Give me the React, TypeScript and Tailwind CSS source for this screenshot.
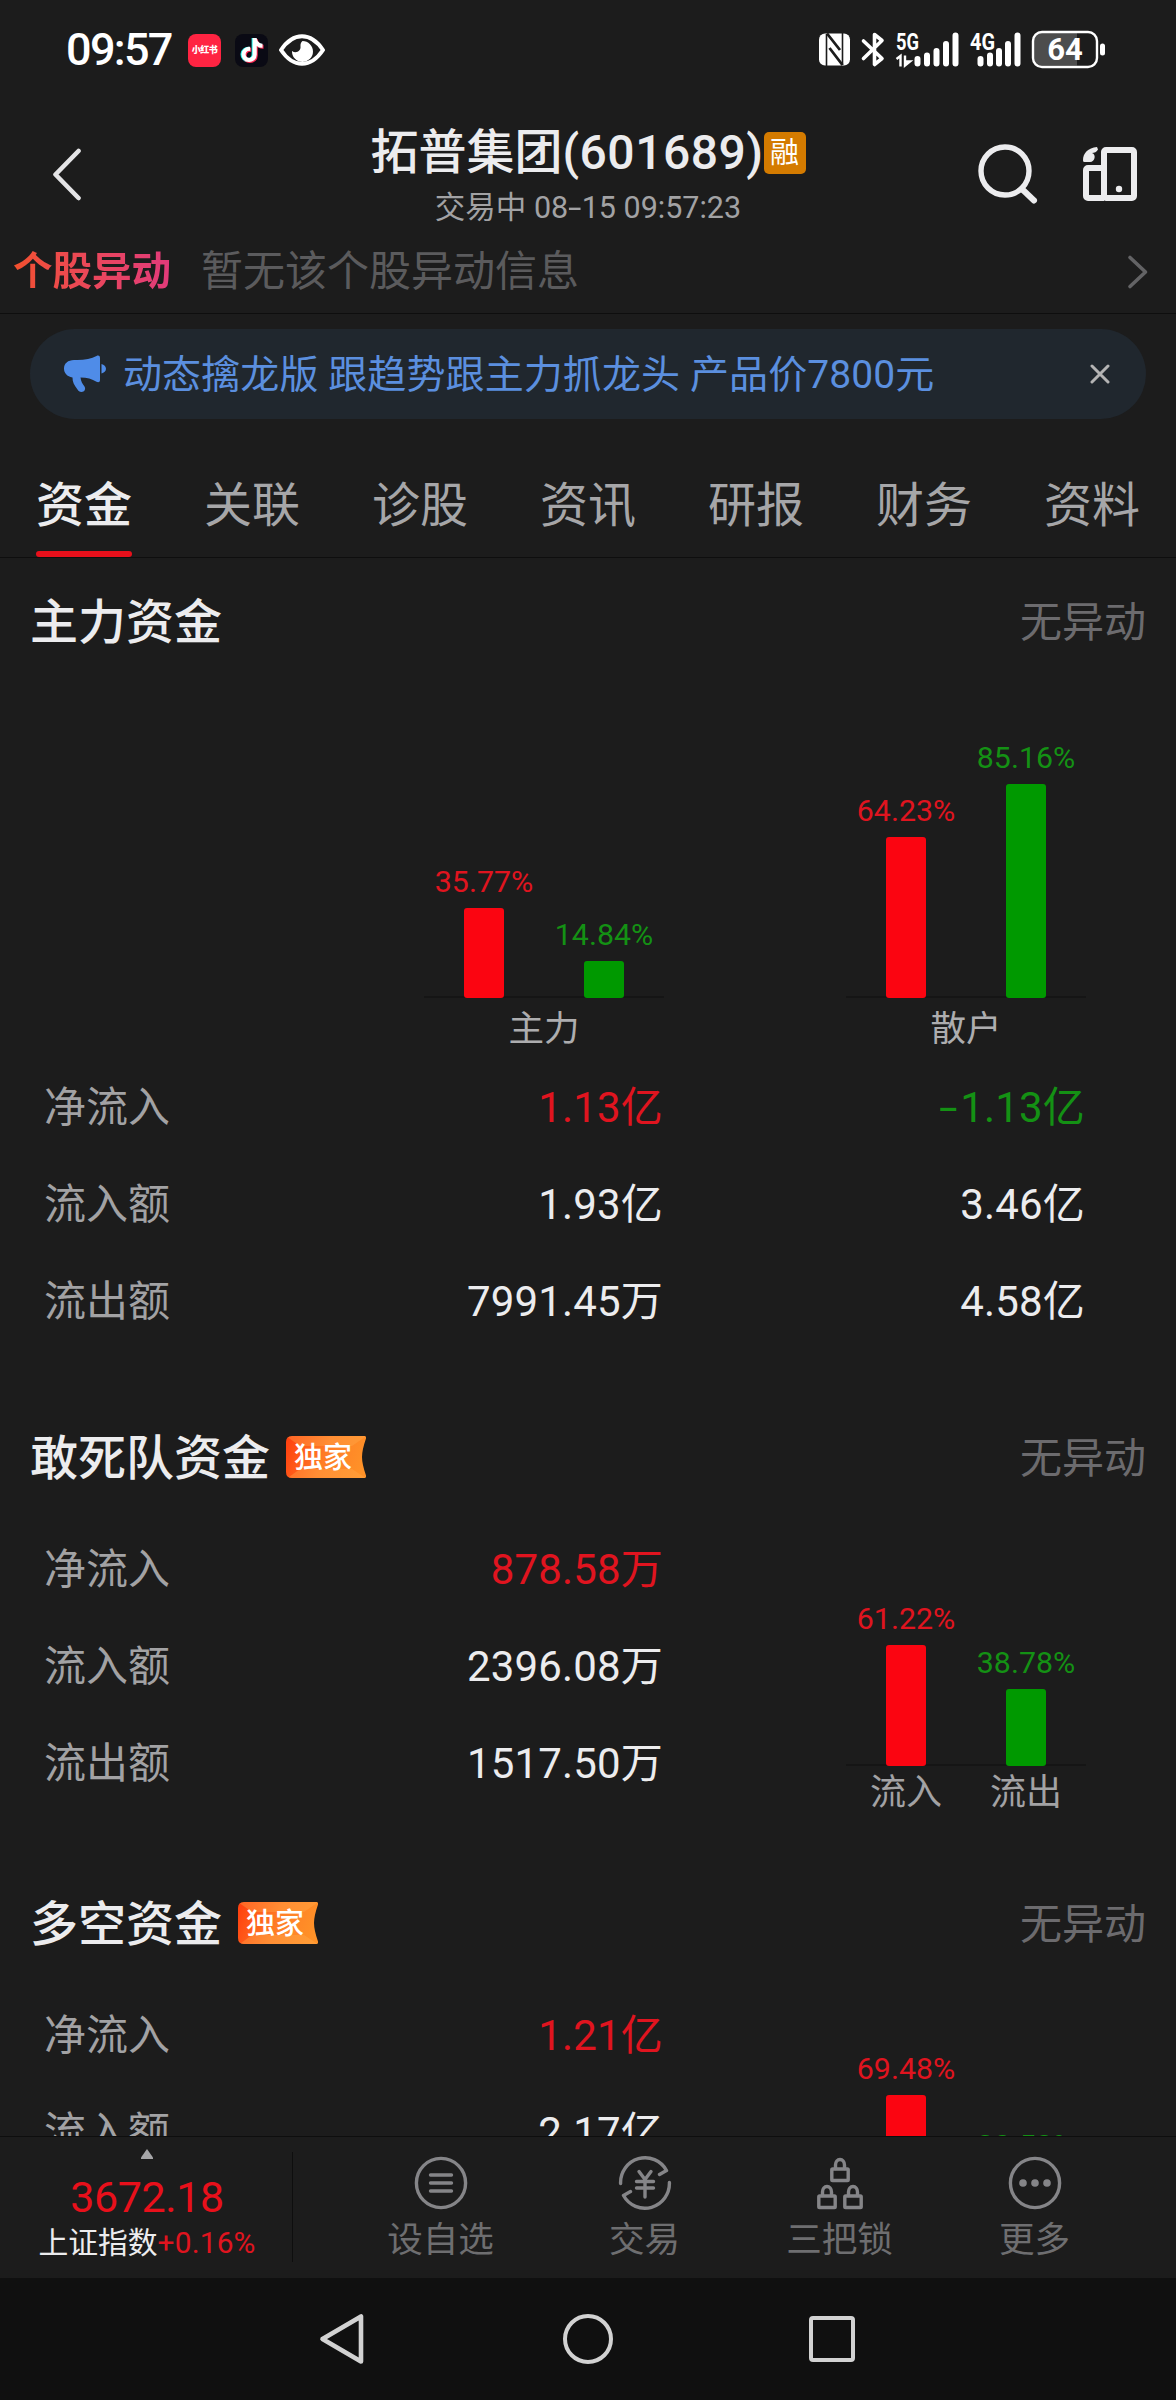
import React from "react";
import { FaTiktok } from "react-icons/fa6";

type Bar = { value: number; tone: "red" | "green" };

const toneText = { red: "text-[#e0141f]", green: "text-[#149114]", white: "text-[#ececee]" };
const toneBar = { red: "bg-[#fb0511]", green: "bg-[#009900]" };

function StatusBar() {
  return (
    <div className="flex h-[100px] shrink-0 items-center pl-[66px] pr-[71px] text-white">
      <span className="w-[122px] text-[45px] font-medium leading-[44px] tracking-[-1.7px]">09:57</span>
      <span className="flex h-[33px] w-[33px] items-center justify-center rounded-[8px] bg-[#ff2442] text-[9px] font-black leading-none tracking-[-0.5px]">
        小红书
      </span>
      <span className="relative ml-[14px] h-[33px] w-[33px] rounded-[8px] bg-[#0a0a14]">
        <FaTiktok className="absolute left-[4px] top-[4px] h-[24px] w-[24px] text-[#25f4ee]" />
        <FaTiktok className="absolute left-[6px] top-[5px] h-[24px] w-[24px] text-[#fe2c55]" />
        <FaTiktok className="absolute left-[5px] top-[4px] h-[24px] w-[24px] text-white" />
      </span>
      <svg className="ml-[11px]" width="46" height="32" viewBox="0 0 46 32" fill="none">
        <path d="M2 16C8 7 15 2.200 23 2.200S38 7 44 16C38 25 31 29.800 23 29.800S8 25 2 16Z" stroke="white" strokeWidth="4" strokeLinejoin="round" />
        <path d="M23.500 7a10.500 10.500 0 1 1-10.500 10c4 3 9 0 8.500-4.500C21.300 10 22 8 23.500 7Z" fill="white" />
      </svg>
      <div className="flex-1" />
      <svg width="286" height="40" viewBox="0 0 286 40" fill="none">
        <rect y="3.500" width="31" height="32" rx="6" fill="white" />
        <path d="M7.500 4V36M23.500 3V35" stroke="#1c1c1c" strokeWidth="1.600" />
        <path d="M8 3.500L21 20M10.500 18L23.500 35" stroke="#1c1c1c" strokeWidth="2.800" />
        <path d="M44.500 11L63 28.500L55.500 34.500V4.500L63 10.500L44.500 28.500" stroke="white" strokeWidth="3.600" strokeLinejoin="round" strokeLinecap="round" />
        <g fill="white" fontFamily="Roboto" fontWeight="700" fontSize="23">
          <text x="77" y="19.500" textLength="23" lengthAdjust="spacingAndGlyphs">5G</text>
          <text x="151" y="19.500" textLength="25" lengthAdjust="spacingAndGlyphs">4G</text>
        </g>
        <path d="M77.500 29l4-3v10.500M86 25.500v10l5-4h-4" stroke="white" strokeWidth="2.400" />
        <g stroke="white" strokeWidth="6" strokeLinecap="round">
          <path d="M98.500 29V33.500M108 25.500V33.500M117.500 21V33.500M127 14V33.500M136.500 5.500V33.500" />
          <path d="M161.500 29V33.500M171 25.500V33.500M180 21V33.500M189 14V33.500M198.500 5.500V33.500" />
        </g>
        <path d="M223 2.500h35v33h-35a8 8 0 0 1-8-8v-17a8 8 0 0 1 8-8Z" fill="#4d4d4d" />
        <rect x="214" y="2" width="64" height="35" rx="9" stroke="white" strokeWidth="2.400" />
        <rect x="281" y="13.500" width="5" height="12" rx="2.500" fill="white" />
        <text x="246" y="30" textAnchor="middle" fill="white" fontFamily="Roboto" fontWeight="700" fontSize="31">64</text>
      </svg>
    </div>
  );
}

function Hyphen() {
  return <span className="inline-block origin-right scale-x-[1.6]">-</span>;
}

function Header() {
  return (
    <header className="flex h-[129px] shrink-0 items-start justify-between pl-[52px] pr-[38px]">
      <div className="w-[147px] pt-[48px]">
        <svg width="29" height="53" viewBox="0 0 29 53" fill="none">
          <path d="M26.500 3L3.500 26.500L26.500 50" stroke="#e4e4e6" strokeWidth="4.600" strokeLinecap="round" strokeLinejoin="round" />
        </svg>
      </div>
      <div className="flex flex-col items-center pt-[28px]">
        <div className="flex items-center text-[48px] font-medium leading-[50px] text-[#ececee]">
          <span>拓普集团</span>
          <span className="tracking-[0.5px]">(601689)</span>
          <span className="flex h-[42px] w-[42px] items-center justify-center rounded-[5px] bg-[#d47b00] text-[29px] font-normal leading-none text-white">
            融
          </span>
        </div>
        <div className="mt-[12px] text-[30.500px] leading-[36px] text-[#a2a2a4]">
          交易中 08<span className="ml-[5px]"><Hyphen /></span>15 09:57:23
        </div>
      </div>
      <div className="flex w-[161px] pt-[43px]">
        <svg width="62" height="62" viewBox="0 0 62 62" fill="none" stroke="#ececee">
          <circle cx="28" cy="28" r="24" strokeWidth="5.400" />
          <path d="M46 47L57 57.500" strokeWidth="6" strokeLinecap="round" />
        </svg>
        <svg className="ml-[44px] mt-[4px]" width="54" height="54" viewBox="0 0 54 54" fill="none" stroke="#ececee">
          <rect x="21" y="3" width="30" height="48" rx="2" strokeWidth="6" />
          <path d="M21 51H5a2 2 0 0 1-2-2V23a2 2 0 0 1 2-2H21" strokeWidth="6" />
          <circle cx="36" cy="42" r="3.200" fill="#ececee" stroke="none" />
          <path d="M14 0C5 1 0 6 0 13.500h0A1.500 1.500 0 0 0 1.500 15H7c5 0 6.500-7.500 2-9C11 6 14 5 15 2.500Z" fill="#ececee" stroke="none" />
        </svg>
      </div>
    </header>
  );
}

function AlertRow() {
  return (
    <div className="flex h-[85px] shrink-0 items-center border-b border-[#0e0e0e] pl-[13px] pr-[27px] pt-[2px]">
      <span className="bg-gradient-to-r from-[#f2502c] to-[#e23a7a] bg-clip-text text-[39.500px] font-bold leading-[50px] text-transparent">
        个股异动
      </span>
      <span className="ml-[30px] text-[42px] leading-[50px] text-[#5b5b5d]">暂无该个股异动信息</span>
      <svg className="ml-auto" width="22" height="36" viewBox="0 0 22 36" fill="none">
        <path d="M3 3.500L18.500 18L3 32.500" stroke="#636365" strokeWidth="3.600" strokeLinecap="round" strokeLinejoin="round" />
      </svg>
    </div>
  );
}

function Promo() {
  return (
    <div className="mx-[30px] mt-[15px] flex h-[90px] shrink-0 items-center rounded-full bg-[#20272e] pl-[33px] pr-[36px]">
      <svg width="44" height="38" viewBox="0 0 44 38" fill="#4f8ce8">
        <path d="M11 5C20 5.500 28 4 33.500 1C35.500 0 37 .8 37 3V25c0 2-1.500 2.800-3.500 1.800C29 24 24 22.500 17.500 22.500C17.800 26 19.500 29 21.500 31.500C23 34 21.500 37 18.500 37C16.500 37 15.300 36 14.500 34.500C11 30 9.500 27 9.500 22.500C4 21.500 1 18 1 13.500C1 8.500 5 5 11 5Z" />
        <path d="M38.500 9C41 9.500 43 11.500 43 13.800S41 18 38.500 18.600Z" />
      </svg>
      <span className="ml-[16px] pt-[2px] text-[39px] leading-[50px] tracking-[0.1px] text-[#5b8fdf]">
        动态擒龙版 跟趋势跟主力抓龙头 产品价7800元
      </span>
      <svg className="ml-auto" width="20" height="20" viewBox="0 0 20 20">
        <path d="M2 2L18 18M18 2L2 18" stroke="#b4b4b4" strokeWidth="3" strokeLinecap="round" />
      </svg>
    </div>
  );
}

const tabs = ["资金", "关联", "诊股", "资讯", "研报", "财务", "资料"];

function Tabs() {
  return (
    <nav className="flex h-[139px] shrink-0 gap-[72px] border-b border-[#0e0e0e] pl-[36px]">
      {tabs.map((t, i) => (
        <div key={t} className="flex w-[96px] flex-col justify-between whitespace-nowrap pt-[57px] text-[48px] leading-[60px]">
          <span className={i === 0 ? "font-medium text-[#ececee]" : "text-[#a6a6a8]"}>{t}</span>
          {i === 0 && <span className="h-[6px] rounded-[3px] bg-[#e8101b]" />}
        </div>
      ))}
    </nav>
  );
}

function Exclusive() {
  return (
    <span className="relative ml-[16px] h-[42px] w-[80px] pl-[8px] text-[29px] font-medium leading-[45px] text-white">
      <svg className="absolute left-0 top-0" width="80" height="42" viewBox="0 0 80 42">
        <defs>
          <linearGradient id="ribbon" x1="0" x2="1" y1="0.300" y2="0.500">
            <stop offset="0" stopColor="#ff4310" />
            <stop offset="0.500" stopColor="#ff7d26" />
            <stop offset="1" stopColor="#ff9228" />
          </linearGradient>
        </defs>
        <path d="M6 0H78.500Q80.500 0 80 2.500Q76 14 76 21T80 39.500Q80.500 42 78.500 42H6Q0 42 0 36V6Q0 0 6 0Z" fill="url(#ribbon)" />
        <path d="M2 1.500L14 10H66L79 1Q79 0 78 0H6Q3 0 2 1.500Z" fill="#ffb050" opacity="0.350" />
        <path d="M3 41L14 33H66L79 41.500L78 42H6Q4 42 3 41Z" fill="#ffb050" opacity="0.350" />
      </svg>
      <span className="relative">独家</span>
    </span>
  );
}

function SectionTitle({ title, exclusive }: { title: string; exclusive?: boolean }) {
  return (
    <div className="flex h-[126px] items-center pl-[30px] pr-[30px]">
      <h2 className="pt-[3px] text-[48px] font-medium leading-[60px] text-[#ececee]">{title}</h2>
      {exclusive && <Exclusive />}
      <span className="ml-auto pt-[3px] text-[42px] leading-[60px] text-[#6c6b6e]">无异动</span>
    </div>
  );
}

function BarPair({ bars, scale }: { bars: Bar[]; scale: number }) {
  return (
    <div className="relative flex w-[240px] items-end">
      <div className="absolute bottom-0 left-0 h-[2px] w-full bg-[#151515]" />
      {bars.map((b) => (
        <div key={b.tone} className="relative flex w-[120px] flex-col items-center">
          <span className={`text-[30.300px] leading-[36px] ${toneText[b.tone]}`}>{b.value.toFixed(2)}%</span>
          <span className={`mt-[8px] w-[40px] rounded-[3px] ${toneBar[b.tone]}`} style={{ height: b.value * scale }} />
        </div>
      ))}
    </div>
  );
}

type Cell = { text: string; tone: "red" | "green" | "white" };

function Rows({ rows }: { rows: { label: string; cells: Cell[] }[] }) {
  return (
    <div className="pl-[44px] text-[42px] leading-[97px]">
      {rows.map((r) => (
        <div key={r.label} className="flex h-[97px]">
          <span className="w-[197px] pt-px text-[#a2a2a4]">{r.label}</span>
          {r.cells.map((c) => (
            <span key={c.text} className={`w-[422px] pt-px text-right tracking-[0.150px] ${toneText[c.tone]}`}>
              {c.text.startsWith("-") ? (
                <>
                  <Hyphen />
                  <span className="ml-[3px]">{c.text.slice(1)}</span>
                </>
              ) : (
                c.text
              )}
            </span>
          ))}
        </div>
      ))}
    </div>
  );
}

function MainFunds() {
  const groups: { name: string; bars: Bar[] }[] = [
    { name: "主力", bars: [{ value: 35.77, tone: "red" }, { value: 14.84, tone: "green" }] },
    { name: "散户", bars: [{ value: 64.23, tone: "red" }, { value: 85.16, tone: "green" }] },
  ];
  return (
    <section>
      <SectionTitle title="主力资金" />
      <div className="flex pl-[242px]">
        {groups.map((g) => (
          <div key={g.name} className="flex w-[422px] flex-col items-end">
            <div className="flex h-[314px] items-end">
              <BarPair bars={g.bars} scale={2.51} />
            </div>
            <span className="h-[60px] w-[240px] text-center text-[35.500px] leading-[63px] text-[#adadaf]">{g.name}</span>
          </div>
        ))}
      </div>
      <Rows
        rows={[
          { label: "净流入", cells: [{ text: "1.13亿", tone: "red" }, { text: "-1.13亿", tone: "green" }] },
          { label: "流入额", cells: [{ text: "1.93亿", tone: "white" }, { text: "3.46亿", tone: "white" }] },
          { label: "流出额", cells: [{ text: "7991.45万", tone: "white" }, { text: "4.58亿", tone: "white" }] },
        ]}
      />
    </section>
  );
}

const rowLabels = ["净流入", "流入额", "流出额"];

function FlowFunds({ title, values, inflow, outflow, captions }: { title: string; values: string[]; inflow: number; outflow: number; captions: string[] }) {
  return (
    <section className="h-[466px] shrink-0">
      <SectionTitle title={title} exclusive />
      <div className="flex">
        <Rows rows={values.map((text, i) => ({ label: rowLabels[i], cells: [{ text, tone: i === 0 ? "red" : "white" }] }))} />
        <div className="ml-[183px]">
          <div className="flex h-[246px] items-end">
            <BarPair scale={1.976} bars={[{ value: inflow, tone: "red" }, { value: outflow, tone: "green" }]} />
          </div>
          <div className="flex text-center text-[36px] leading-[54px] text-[#a2a2a4]">
            {captions.map((c) => (
              <span key={c} className="w-[120px]">
                {c}
              </span>
            ))}
          </div>
        </div>
      </div>
    </section>
  );
}

function Lock({ x, y }: { x: number; y: number }) {
  return (
    <g transform={`translate(${x} ${y})`}>
      <path d="M5.500 11V7.500a4.500 5.500 0 0 1 9 0V11" />
      <rect x="1.800" y="11.500" width="16.400" height="11.500" rx="0.800" />
    </g>
  );
}

const iconProps = {
  width: 54,
  height: 54,
  viewBox: "0 0 54 54",
  fill: "none",
  stroke: "#858588",
  strokeWidth: 3.4,
  strokeLinecap: "round" as const,
  strokeLinejoin: "round" as const,
};

const actions = [
  {
    name: "设自选",
    icon: (
      <svg {...iconProps}>
        <circle cx="27" cy="27" r="24.600" />
        <path d="M16.500 19H37.500M16.500 27H37.500M16.500 35H37.500" />
      </svg>
    ),
  },
  {
    name: "交易",
    icon: (
      <svg {...iconProps}>
        <path d="M2.600 27.500A24.500 24.700 0 0 1 48.500 14.500L41.500 18.500M51.400 26.500A24.500 24.700 0 0 1 5.500 39.500L12.500 35.500" />
        <path d="M21 15.500L27 23.500L33 15.500M18.500 25.500H35.500M18.500 32H35.500M27 24V41" />
      </svg>
    ),
  },
  {
    name: "三把锁",
    icon: (
      <svg {...iconProps} strokeLinejoin="miter">
        <Lock x={17} y={1.5} />
        <Lock x={4} y={28.5} />
        <Lock x={30} y={28.5} />
      </svg>
    ),
  },
  {
    name: "更多",
    icon: (
      <svg {...iconProps}>
        <circle cx="27" cy="27" r="24.600" />
        <g fill="#858588" stroke="none">
          <circle cx="15" cy="27" r="3.800" />
          <circle cx="27" cy="27" r="3.800" />
          <circle cx="39" cy="27" r="3.800" />
        </g>
      </svg>
    ),
  },
];

function ActionBar() {
  return (
    <div className="flex h-[142px] shrink-0 border-t border-[#0e0e0e]">
      <div className="flex w-[292px] flex-col items-center pl-[2px] pt-[12px]">
        <svg width="12" height="10" viewBox="0 0 12 10">
          <path d="M6 0L12 8.500V10H0V8.500Z" fill="#a6a6a8" />
        </svg>
        <div className="mt-[13px] text-[43px] leading-[50px] tracking-[-0.400px] text-[#e8101b]">3672.18</div>
        <div className="mt-[3px] text-[29.800px] leading-[36px] text-[#ececee]">
          上证指数<span className="tracking-[0.200px] text-[#e0141f]">+0.16%</span>
        </div>
      </div>
      <div className="mt-[15px] h-[110px] w-px bg-[#0e0e0e]" />
      <div className="ml-[41px] flex">
        {actions.map((a) => (
          <div key={a.name} className="flex w-[195px] flex-col items-center pt-[19px] first:w-[213px]">
            {a.icon}
            <span className="mt-[9px] text-[35.600px] leading-[42px] text-[#6e6e70]">{a.name}</span>
          </div>
        ))}
      </div>
    </div>
  );
}

function SystemNav() {
  return (
    <div className="flex h-[122px] shrink-0 items-center bg-[#101010] pl-[319px]">
      <svg width="46" height="52" viewBox="0 0 46 52" fill="none">
        <path d="M42 3.500V48.500L3.500 26Z" stroke="#d2d2d2" strokeWidth="4.600" strokeLinejoin="round" />
      </svg>
      <span className="ml-[198px] h-[50px] w-[50px] rounded-full border-[4.500px] border-[#d2d2d2]" />
      <span className="ml-[196px] h-[46px] w-[46px] rounded-[4px] border-[4.500px] border-[#d2d2d2]" />
    </div>
  );
}

export default function App() {
  return (
    <div className="flex h-[2400px] w-[1176px] flex-col overflow-hidden bg-[#1c1c1c] font-['Roboto','Noto_Sans_CJK_SC',sans-serif]">
      <StatusBar />
      <Header />
      <AlertRow />
      <Promo />
      <Tabs />
      <main className="min-h-0 flex-1 overflow-hidden">
        <MainFunds />
        <div className="h-[45px]" />
        <FlowFunds title="敢死队资金" values={["878.58万", "2396.08万", "1517.50万"]} inflow={61.22} outflow={38.78} captions={["流入", "流出"]} />
        <FlowFunds title="多空资金" values={["1.21亿", "2.17亿"]} inflow={69.48} outflow={30.52} captions={[]} />
      </main>
      <ActionBar />
      <SystemNav />
    </div>
  );
}
